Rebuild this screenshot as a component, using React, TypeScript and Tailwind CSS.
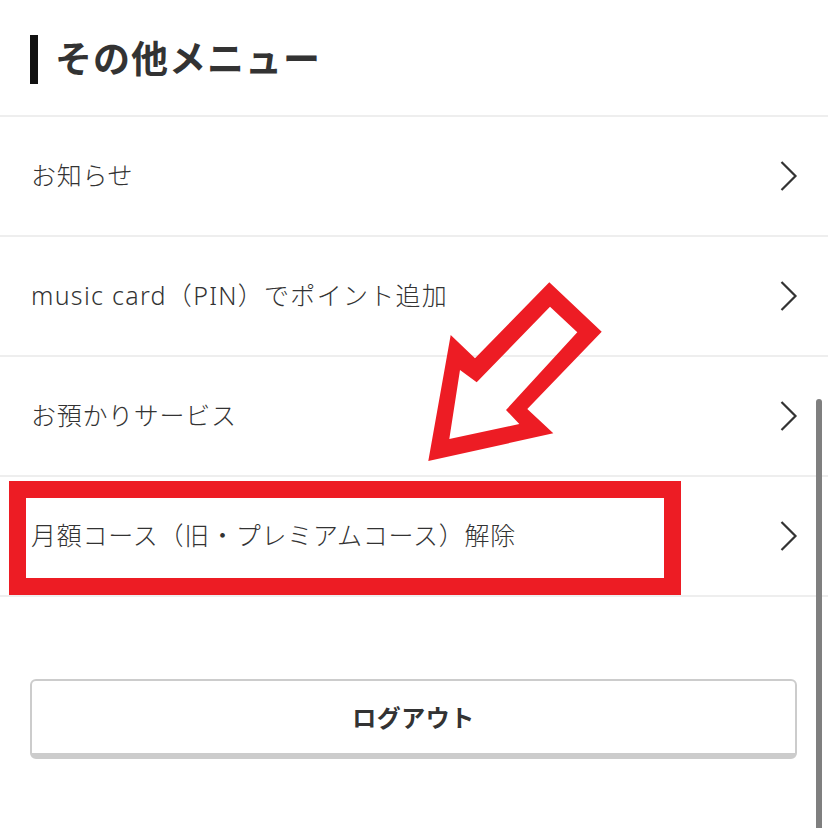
import React from "react";

const items: { t: string; track: string }[] = [
  { t: "お知らせ", track: "tracking-[0.7px]" },
  { t: "music card（PIN）でポイント追加", track: "tracking-[1.3px]" },
  { t: "お預かりサービス", track: "tracking-[0.7px]" },
  { t: "月額コース（旧・プレミアムコース）解除", track: "tracking-[0.75px]" },
];

function Chevron() {
  return (
    <svg width="18" height="32" viewBox="0 0 18 32" className="shrink-0">
      <polyline points="1.5,2 15.5,16 1.5,30" fill="none" stroke="#333" strokeWidth="2.2" strokeLinejoin="miter" />
    </svg>
  );
}

export default function App() {
  return (
    <div
      className="relative w-[828px] h-[828px] overflow-hidden bg-white text-[#333]"
      style={{ fontFamily: '"Noto Sans CJK JP", "Noto Sans", sans-serif' }}
    >
      <div className="h-[115px] pl-[30px] pt-[35px]">
        <div className="flex items-center h-[49px]">
          <div className="w-[8px] h-[49px] bg-[#111]" />
          <h2 className="ml-[17px] -mt-[4px] text-[37px] font-bold leading-none text-[#333] tracking-[1px]">その他メニュー</h2>
        </div>
      </div>
      <ul className="border-t-2 border-[#eeeeee]">
        {items.map((it) => (
          <li
            key={it.t}
            className="h-[120px] border-b-2 border-[#eeeeee] flex items-center justify-between pl-[31px] pr-[30px]"
          >
            <span
              className={`text-[25px] font-light leading-none text-[#333] -mt-[2px] ${it.track}`}
              style={{ fontFamily: '"Noto Sans", "Noto Sans CJK JP", sans-serif' }}
            >
              {it.t}
            </span>
            <Chevron />
          </li>
        ))}
      </ul>
      <div className="px-[30px] pt-[82px] pr-[31px]">
        <button className="w-full h-[80px] rounded-[6px] border-2 border-b-[6px] border-[#cccccc] bg-white flex items-center justify-center text-[24px] font-bold text-[#333] tracking-[0.5px]">
          ログアウト
        </button>
      </div>

      {/* red highlight box */}
      <div className="absolute left-[9px] top-[481px] w-[672px] h-[114px] border-[17px] border-[#ed1c24]" />

      {/* red arrow */}
      <svg className="absolute left-0 top-0" width="828" height="828" viewBox="0 0 828 828">
        <path
          fillRule="evenodd"
          fill="#ed1c24"
          d="M428.3,461 L450.7,335 L475,358.3 L549.3,282.3 L601.7,331.7 L527.3,409 L553.3,433.3 Z M449.3,439 L460,370 L476.7,382.3 L550,306.7 L577.3,332.3 L506,410 L519.3,424 Z"
        />
      </svg>

      {/* scrollbar */}
      <div className="absolute left-[816px] top-[399px] w-[6px] h-[440px] rounded-full bg-[#7f7f7f]" />
    </div>
  );
}
